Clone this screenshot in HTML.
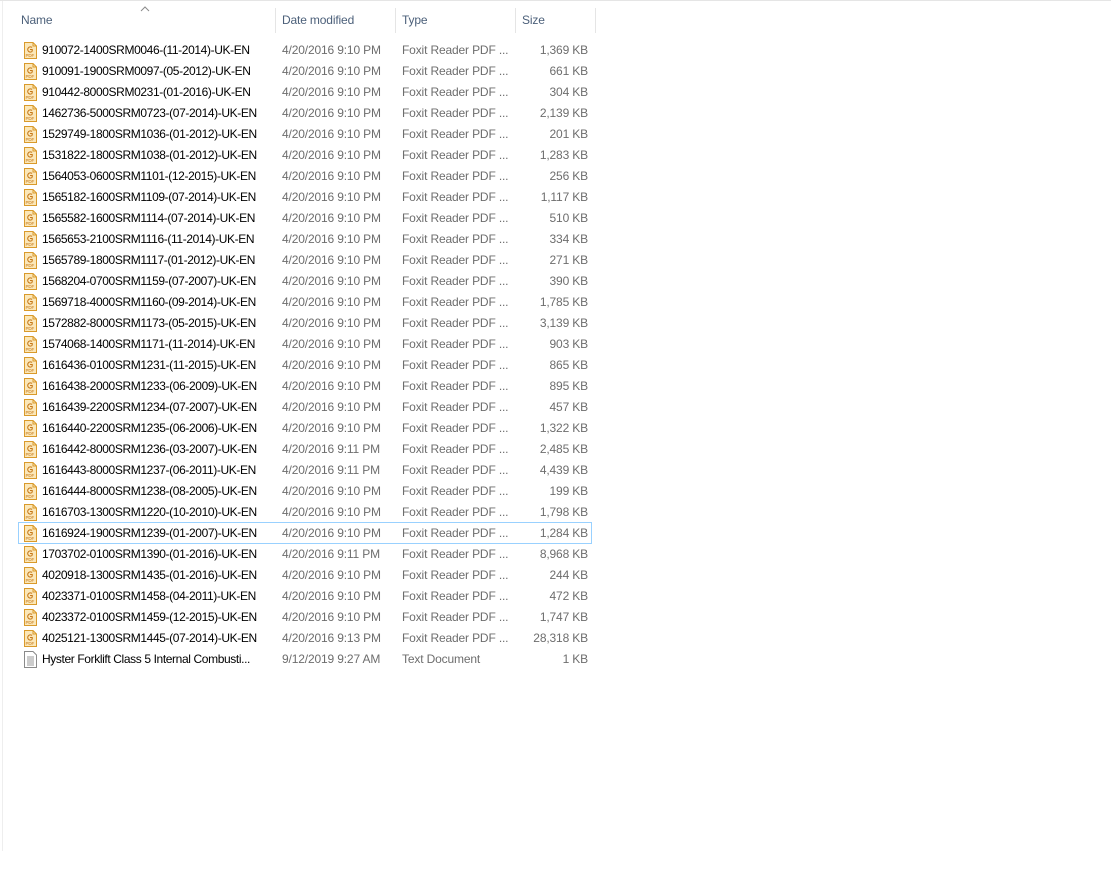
<!DOCTYPE html>
<html><head><meta charset="utf-8"><style>
html,body{margin:0;padding:0;background:#fff;width:1111px;height:870px;overflow:hidden;font-family:"Liberation Sans",sans-serif;font-size:12px;letter-spacing:-0.15px}
.top{position:absolute;left:0;top:0;width:1111px;height:1px;background:#e5e5e5}
.left{position:absolute;left:2px;top:1px;width:1px;height:850px;background:#eeeeee}
.h{position:absolute;top:13px;color:#4c607a;font-size:12px}
.sep{position:absolute;top:8px;width:1px;height:25px;background:#e5e5e5}
.row{position:absolute;left:0;height:21px;width:600px}
.row span{position:absolute;top:3px;white-space:nowrap}
.n{left:42px;color:#000;letter-spacing:-0.38px}
.d{left:282px;color:#6d6d6d}
.t{left:402px;color:#6d6d6d}
.s{right:12px;color:#6d6d6d;text-align:right}
.ic{position:absolute;left:24px;top:2px}
.sel{position:absolute;left:18px;top:522px;width:572px;height:20px;border:1px solid #99d1ff}
</style></head><body>
<div class="top"></div><div class="left"></div>
<svg style="position:absolute;left:140px;top:6px" width="10" height="6"><path d="M1 5 L5 1 L9 5" fill="none" stroke="#8a8a8a" stroke-width="1"/></svg>
<div class="h" style="left:21px">Name</div>
<div class="sep" style="left:275px"></div>
<div class="h" style="left:282px">Date modified</div>
<div class="sep" style="left:395px"></div>
<div class="h" style="left:402px">Type</div>
<div class="sep" style="left:515px"></div>
<div class="h" style="left:522px">Size</div>
<div class="sep" style="left:595px"></div>
<div class="sel"></div>
<div id="rows"></div>
<script>
const pdf='<svg class="ic" width="13" height="17" viewBox="0 0 13 17"><path d="M0.5 0.5H9L12.5 4V16.5H0.5Z" fill="#fbe7b8" stroke="#d99a2b"/><path d="M9 0.5V4H12.5" fill="none" stroke="#d99a2b"/><path d="M8 5.5A2.6 2.6 0 1 0 8 9.5M6 7.5H8.2V9.5" fill="none" stroke="#c6791a" stroke-width="1.1"/><text x="1.5" y="15" font-size="4.5" fill="#c6791a" font-family="Liberation Sans">PDF</text></svg>';
const txt='<svg class="ic" width="13" height="17" viewBox="0 0 13 17"><path d="M0.5 0.5H9L12.5 4V16.5H0.5Z" fill="#fff" stroke="#8a8a8a"/><path d="M3 6H10M3 8H10M3 10H10M3 12H10M3 14H10" stroke="#9a9a9a"/></svg>';
const data=[
["910072-1400SRM0046-(11-2014)-UK-EN","9:10","1,369 KB"],
["910091-1900SRM0097-(05-2012)-UK-EN","9:10","661 KB"],
["910442-8000SRM0231-(01-2016)-UK-EN","9:10","304 KB"],
["1462736-5000SRM0723-(07-2014)-UK-EN","9:10","2,139 KB"],
["1529749-1800SRM1036-(01-2012)-UK-EN","9:10","201 KB"],
["1531822-1800SRM1038-(01-2012)-UK-EN","9:10","1,283 KB"],
["1564053-0600SRM1101-(12-2015)-UK-EN","9:10","256 KB"],
["1565182-1600SRM1109-(07-2014)-UK-EN","9:10","1,117 KB"],
["1565582-1600SRM1114-(07-2014)-UK-EN","9:10","510 KB"],
["1565653-2100SRM1116-(11-2014)-UK-EN","9:10","334 KB"],
["1565789-1800SRM1117-(01-2012)-UK-EN","9:10","271 KB"],
["1568204-0700SRM1159-(07-2007)-UK-EN","9:10","390 KB"],
["1569718-4000SRM1160-(09-2014)-UK-EN","9:10","1,785 KB"],
["1572882-8000SRM1173-(05-2015)-UK-EN","9:10","3,139 KB"],
["1574068-1400SRM1171-(11-2014)-UK-EN","9:10","903 KB"],
["1616436-0100SRM1231-(11-2015)-UK-EN","9:10","865 KB"],
["1616438-2000SRM1233-(06-2009)-UK-EN","9:10","895 KB"],
["1616439-2200SRM1234-(07-2007)-UK-EN","9:10","457 KB"],
["1616440-2200SRM1235-(06-2006)-UK-EN","9:10","1,322 KB"],
["1616442-8000SRM1236-(03-2007)-UK-EN","9:11","2,485 KB"],
["1616443-8000SRM1237-(06-2011)-UK-EN","9:11","4,439 KB"],
["1616444-8000SRM1238-(08-2005)-UK-EN","9:10","199 KB"],
["1616703-1300SRM1220-(10-2010)-UK-EN","9:10","1,798 KB"],
["1616924-1900SRM1239-(01-2007)-UK-EN","9:10","1,284 KB"],
["1703702-0100SRM1390-(01-2016)-UK-EN","9:11","8,968 KB"],
["4020918-1300SRM1435-(01-2016)-UK-EN","9:10","244 KB"],
["4023371-0100SRM1458-(04-2011)-UK-EN","9:10","472 KB"],
["4023372-0100SRM1459-(12-2015)-UK-EN","9:10","1,747 KB"],
["4025121-1300SRM1445-(07-2014)-UK-EN","9:13","28,318 KB"]];
let h='';
data.forEach((r,i)=>{h+=`<div class="row" style="top:${40+21*i}px">${pdf}<span class="n">${r[0]}</span><span class="d">4/20/2016 ${r[1]} PM</span><span class="t">Foxit Reader PDF ...</span><span class="s">${r[2]}</span></div>`;});
h+=`<div class="row" style="top:${40+21*29}px">${txt}<span class="n">Hyster Forklift Class 5 Internal Combusti...</span><span class="d">9/12/2019 9:27 AM</span><span class="t">Text Document</span><span class="s">1 KB</span></div>`;
document.getElementById('rows').innerHTML=h;
</script>
</body></html>
